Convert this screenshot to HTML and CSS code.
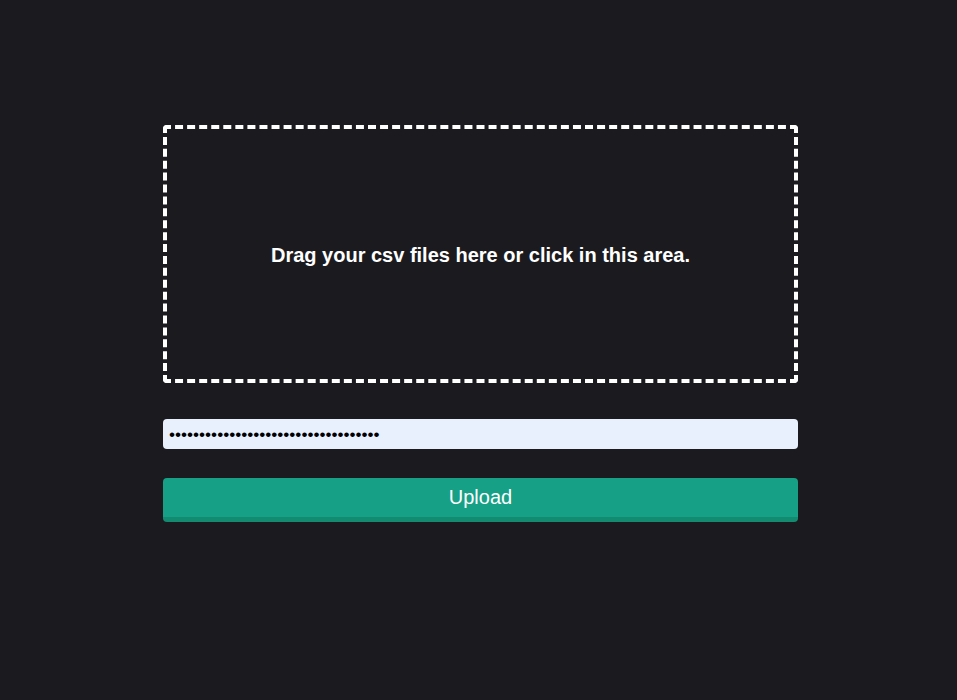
FILE: index.html
```html
<!DOCTYPE html>
<html>
<head>
<meta charset="utf-8">
<link rel="stylesheet" href="styles.css">
</head>
<body>
<form class="wrap">
  <div class="drop">Drag your csv files here or click in this area.</div>
  <input class="pass" type="password" value="abcdefghijklmnopqrstuvwxyz123456789">
  <button type="button" class="upload">Upload</button>
</form>
</body>
</html>
```
FILE: styles.css
```css
html, body {
  margin: 0;
  background: #1b1b1f;
  font-family: "Liberation Sans", Arial, sans-serif;
}
.wrap {
  width: 635px;
  margin: 125px 0 0 163px;
  display: flex;
  flex-direction: column;
}
.drop {
  box-sizing: border-box;
  height: 258px;
  border: 4px dashed #ffffff;
  border-radius: 4px;
  display: flex;
  align-items: center;
  justify-content: center;
  color: #ffffff;
  font-weight: bold;
  font-size: 20px;
  padding-top: 2px;
}
.pass {
  box-sizing: border-box;
  margin-top: 36px;
  height: 30px;
  border: none;
  border-radius: 4px;
  background: #e8f0fe;
  padding: 0 6px;
  font-family: "Liberation Sans", Arial, sans-serif;
  font-size: 17.2px;
  color: #000;
  outline: none;
}
.upload {
  box-sizing: border-box;
  margin-top: 29px;
  height: 44px;
  border: none;
  border-bottom: 5px solid #138b71;
  border-radius: 4px;
  background: #16a085;
  color: #ffffff;
  font-family: "Liberation Sans", Arial, sans-serif;
  font-size: 20px;
  padding: 0 0 1px;
}
```
